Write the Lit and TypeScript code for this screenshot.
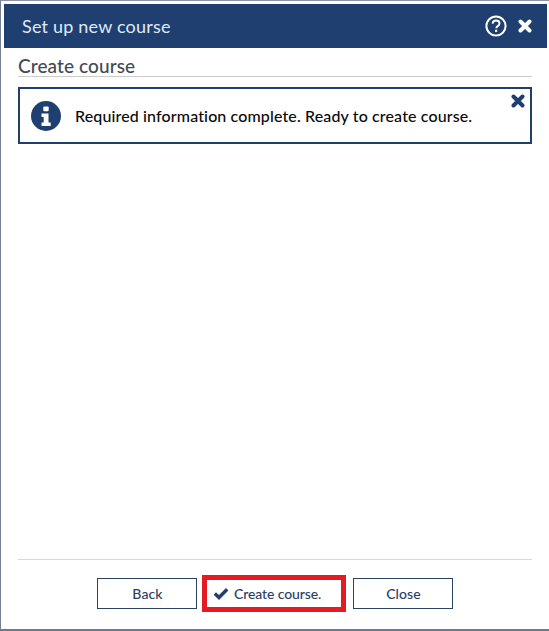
import { LitElement, html, css } from "lit";
import { customElement } from "lit/decorators.js";

@customElement("app-root")
export class AppRoot extends LitElement {
  static styles = css`
    :host {
      display: block;
      width: 549px;
      height: 631px;
      box-sizing: border-box;
      background: #fff;
      font-family: Lato, "Liberation Sans", sans-serif;
      border-top: 1px solid #8a94a3;
      border-left: 1px solid #75808f;
      border-bottom: 2px solid #6c7a8c;
    }
    .window {
      height: 100%;
      box-sizing: border-box;
      display: flex;
      flex-direction: column;
      padding: 3px 2px 0 3px;
    }
    .header {
      height: 44px;
      flex: none;
      background: #1f3f70;
      color: #dfe9f5;
      display: flex;
      align-items: center;
      padding: 0 15px 0 18px;
    }
    .header .title {
      flex: 1;
      font-size: 18px;
      letter-spacing: 0.2px;
    }
    .header .icons {
      display: flex;
      align-items: center;
      gap: 11px;
    }
    .header svg {
      display: block;
    }
    .content {
      flex: 1;
      display: flex;
      flex-direction: column;
      padding: 8px 15px 0 14px;
      min-height: 0;
    }
    h2 {
      margin: 0;
      font-size: 19px;
      line-height: 20px;
      font-weight: 500;
      letter-spacing: 0.1px;
      color: #444a52;
      border-bottom: 1px solid #ccc;
      height: 20px;
      box-sizing: content-box;
    }
    .alert {
      margin-top: 10px;
      height: 57px;
      box-sizing: border-box;
      border: 2px solid #1f3f70;
      display: flex;
      align-items: center;
      gap: 14px;
      padding: 0 11px;
      position: relative;
      font-size: 16px;
      font-weight: 500;
      letter-spacing: 0.13px;
      color: #0a0a0a;
    }
    .alert svg.info {
      flex: none;
    }
    .alert .dismiss {
      position: absolute;
      top: 5px;
      right: 5px;
    }
    .spacer {
      flex: 1;
    }
    .footer {
      border-top: 1px solid #d8d8d8;
      height: 70px;
      box-sizing: border-box;
      display: flex;
      justify-content: center;
      align-items: flex-start;
      padding-top: 15px;
    }
    .btn {
      width: 100px;
      height: 31px;
      margin-top: 3px;
      box-sizing: border-box;
      border: 1px solid #2a4460;
      background: #fff;
      color: #2a4065;
      font: 500 14px Lato, "Liberation Sans", sans-serif;
      letter-spacing: 0.1px;
      display: flex;
      align-items: center;
      justify-content: center;
      padding: 0 0 0 1px;
    }
    .btn.primary {
      width: 144px;
      height: 37px;
      margin: 0 7px 0 5px;
      border: 5px solid #e31b23;
      gap: 5px;
      justify-content: flex-start;
      padding-left: 6px;
      letter-spacing: -0.1px;
    }
  `;

  render() {
    return html`
      <div class="window">
        <div class="header">
          <div class="title">Set up new course</div>
          <div class="icons">
            <svg width="22" height="22" viewBox="0 0 22 22">
              <circle cx="11" cy="11" r="9.6" fill="none" stroke="#fff" stroke-width="2"></circle>
              <path d="M7.6 8.6c.2-2 1.600-3 3.500-3 2 0 3.400 1.100 3.400 2.800 0 1.400-.8 2-1.800 2.700-.9.6-1.300 1-1.300 2.100" fill="none" stroke="#fff" stroke-width="2"></path>
              <rect x="10" y="14.700" width="2.200" height="2.200" fill="#fff"></rect>
            </svg>
            <svg width="14" height="14" viewBox="0 0 14 14">
              <path d="M2.500 2.500 L11.500 11.500 M11.500 2.500 L2.500 11.500" stroke="#fff" stroke-width="4" stroke-linecap="round"></path>
            </svg>
          </div>
        </div>
        <div class="content">
          <h2>Create course</h2>
          <div class="alert">
            <svg class="info" width="30" height="30" viewBox="0 0 30 30">
              <circle cx="15" cy="15" r="15" fill="#1f3f70"></circle>
              <rect x="12.300" y="5.500" width="5.400" height="4.800" rx="1" fill="#fff"></rect>
              <path d="M10.500 12.500h7v9h2.200v3.500h-9.200v-3.500h2.200v-5.500h-2.200z" fill="#fff"></path>
            </svg>
            <span>Required information complete. Ready to create course.</span>
            <svg class="dismiss" width="14" height="14" viewBox="0 0 14 14">
              <path d="M2.500 2.500 L11.500 11.500 M11.500 2.500 L2.500 11.500" stroke="#1f3f70" stroke-width="4" stroke-linecap="round"></path>
            </svg>
          </div>
          <div class="spacer"></div>
          <div class="footer">
            <button class="btn">Back</button>
            <button class="btn primary">
              <svg width="16" height="13" viewBox="0 0 16 13">
                <path d="M1.800 6.500 L6 10.500 L14.200 2.200" fill="none" stroke="#1f3f70" stroke-width="3.400"></path>
              </svg>
              <span>Create course.</span>
            </button>
            <button class="btn">Close</button>
          </div>
        </div>
      </div>
    `;
  }
}
